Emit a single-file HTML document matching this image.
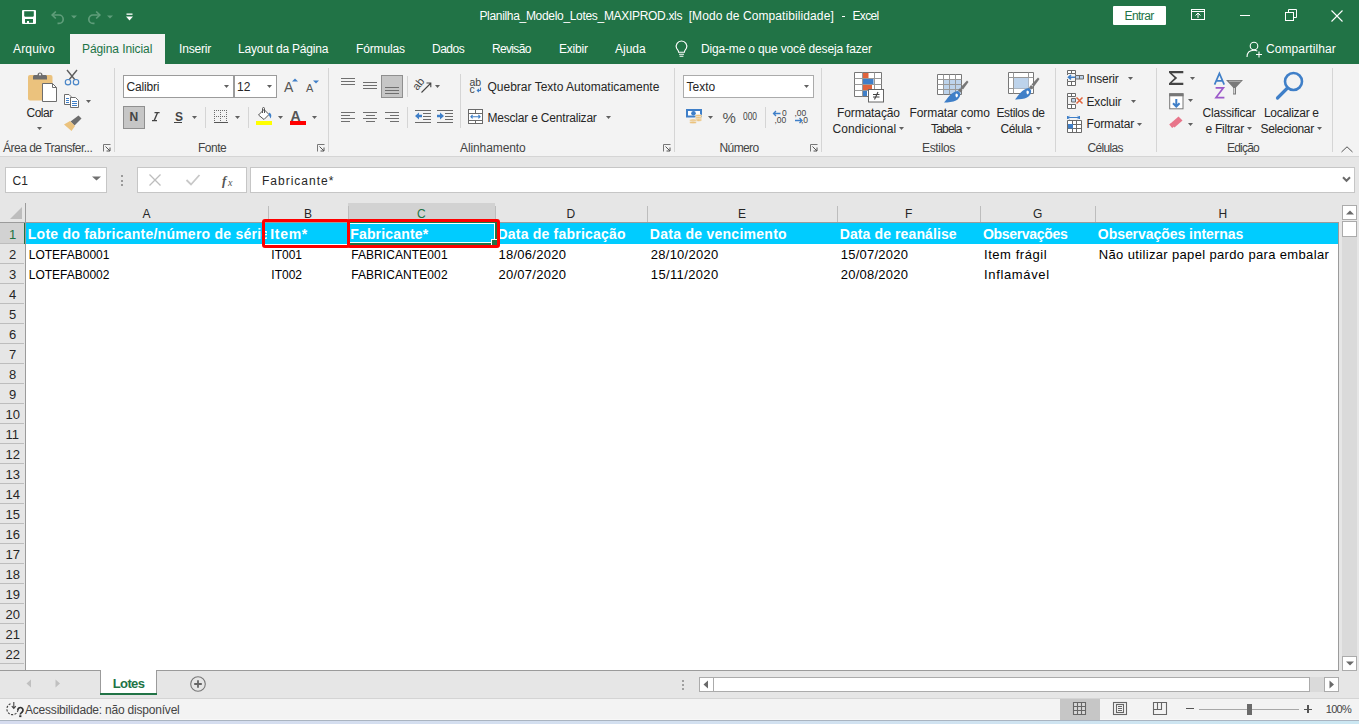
<!DOCTYPE html>
<html><head><meta charset="utf-8">
<style>
*{margin:0;padding:0;box-sizing:border-box}
html,body{width:1359px;height:724px;overflow:hidden;background:#e6e6e6;font-family:"Liberation Sans",sans-serif;position:relative}
.a{position:absolute;white-space:nowrap}
svg.a{overflow:visible}
</style></head><body>
<div class="a" style="left:0px;top:0px;width:1359px;height:64px;background:#217346;"></div>
<svg class="a" style="left:18px;top:6px;" width="24" height="22" viewBox="0 0 24 22"><rect x="4" y="4" width="14" height="14" rx="1" fill="#fff"/><path d="M6.2 5.3H15.8V10L15 10.8H7L6.2 10Z" fill="#217346"/><rect x="7" y="13" width="8" height="3.8" fill="#217346"/><rect x="9" y="15" width="2" height="2" fill="#fff"/></svg>
<svg class="a" style="left:50px;top:9px;" width="16" height="15" viewBox="0 0 16 15"><path d="M2.5 6H9A4.2 4.2 0 0 1 9 14.4H7.5" fill="none" stroke="#5f9d7a" stroke-width="1.7"/><path d="M5.8 2.5L2.2 6L5.8 9.5" fill="none" stroke="#5f9d7a" stroke-width="1.7"/></svg>
<svg class="a" style="left:71px;top:15px;" width="6" height="4" viewBox="0 0 6 4"><path d="M0 0.5H6L3 3.5Z" fill="#5f9d7a"/></svg>
<svg class="a" style="left:86px;top:9px;" width="16" height="15" viewBox="0 0 16 15"><path d="M13.5 6H7A4.2 4.2 0 0 0 7 14.4H8.5" fill="none" stroke="#5f9d7a" stroke-width="1.7"/><path d="M10.2 2.5L13.8 6L10.2 9.5" fill="none" stroke="#5f9d7a" stroke-width="1.7"/></svg>
<svg class="a" style="left:107px;top:15px;" width="6" height="4" viewBox="0 0 6 4"><path d="M0 0.5H6L3 3.5Z" fill="#5f9d7a"/></svg>
<svg class="a" style="left:126px;top:13px;" width="7" height="8" viewBox="0 0 7 8"><rect x="0.5" y="0.5" width="6" height="1.3" fill="#fff"/><path d="M0 3.5H7L3.5 7.5Z" fill="#fff"/></svg>
<div class="a" style="left:479.40px;top:9.00px;font-size:12px;line-height:15px;color:#fff;letter-spacing:-0.315px;">Planilha_Modelo_Lotes_MAXIPROD.xls</div>
<div class="a" style="left:688.70px;top:9.00px;font-size:12px;line-height:15px;color:#fff;letter-spacing:0.096px;">[Modo de Compatibilidade]</div>
<div class="a" style="left:842px;top:16px;width:3px;height:1px;background:#fff;"></div>
<div class="a" style="left:852.50px;top:9.00px;font-size:12px;line-height:15px;color:#fff;letter-spacing:-0.675px;">Excel</div>
<div class="a" style="left:1113px;top:6px;width:53px;height:19px;background:#fff;border-radius:1px"></div>
<div class="a" style="left:1124.60px;top:9.00px;font-size:12px;line-height:15px;color:#217346;letter-spacing:-0.600px;">Entrar</div>
<svg class="a" style="left:1191px;top:9px;" width="15" height="12" viewBox="0 0 15 12"><rect x="0.5" y="0.5" width="13" height="10" fill="none" stroke="#fff" stroke-width="1"/><path d="M0.5 2.5H13.5" stroke="#fff"/><path d="M7 9V4.5M4.5 6.5L7 4L9.5 6.5" fill="none" stroke="#fff"/></svg>
<div class="a" style="left:1240px;top:15px;width:10px;height:1px;background:#fff;"></div>
<svg class="a" style="left:1285px;top:9px;" width="12" height="12" viewBox="0 0 12 12"><rect x="0.5" y="3.5" width="8" height="8" fill="none" stroke="#fff"/><path d="M3.5 3.5V0.5H11.5V8.5H8.5" fill="none" stroke="#fff"/></svg>
<svg class="a" style="left:1331px;top:10px;" width="12" height="12" viewBox="0 0 12 12"><path d="M0.5 0.5L11.5 11.5M11.5 0.5L0.5 11.5" stroke="#fff" stroke-width="1.1"/></svg>
<div class="a" style="left:70px;top:34px;width:95px;height:30px;background:#f3f3f3;"></div>
<div class="a" style="left:13.00px;top:42.00px;font-size:12px;line-height:15px;color:#fff;letter-spacing:0.167px;">Arquivo</div>
<div class="a" style="left:82.00px;top:42.00px;font-size:12px;line-height:15px;color:#217346;letter-spacing:-0.077px;">Página Inicial</div>
<div class="a" style="left:179.00px;top:42.00px;font-size:12px;line-height:15px;color:#fff;letter-spacing:-0.167px;">Inserir</div>
<div class="a" style="left:238.00px;top:42.00px;font-size:12px;line-height:15px;color:#fff;letter-spacing:-0.200px;">Layout da Página</div>
<div class="a" style="left:356.00px;top:42.00px;font-size:12px;line-height:15px;color:#fff;letter-spacing:-0.143px;">Fórmulas</div>
<div class="a" style="left:432.00px;top:42.00px;font-size:12px;line-height:15px;color:#fff;letter-spacing:-0.500px;">Dados</div>
<div class="a" style="left:492.00px;top:42.00px;font-size:12px;line-height:15px;color:#fff;letter-spacing:-0.667px;">Revisão</div>
<div class="a" style="left:559.00px;top:42.00px;font-size:12px;line-height:15px;color:#fff;letter-spacing:-0.200px;">Exibir</div>
<div class="a" style="left:615.00px;top:42.00px;font-size:12px;line-height:15px;color:#fff;">Ajuda</div>
<svg class="a" style="left:674px;top:40px;" width="16" height="18" viewBox="0 0 16 18"><path d="M4.6 12.2C4.6 10.5 3.2 9.5 2.6 8.3A5.3 5.3 0 1 1 12.4 8.3C11.8 9.5 10.4 10.5 10.4 12.2Z" fill="none" stroke="#fff" stroke-width="1.1"/><path d="M5 14.3H10M5.6 16.3H9.4" stroke="#fff" stroke-width="1.1"/></svg>
<div class="a" style="left:701.00px;top:42.00px;font-size:12px;line-height:15px;color:#fff;letter-spacing:-0.167px;">Diga-me o que você deseja fazer</div>
<svg class="a" style="left:1246px;top:41px;" width="17" height="17" viewBox="0 0 17 17"><circle cx="8" cy="5" r="3.8" fill="none" stroke="#fff" stroke-width="1.1"/><path d="M1 16C1 11.5 4 9.3 8 9.3C9.5 9.3 10.5 9.6 11.3 10" fill="none" stroke="#fff" stroke-width="1.1"/><path d="M13 10.5V16.5M10 13.5H16" stroke="#fff" stroke-width="1.1"/></svg>
<div class="a" style="left:1266.00px;top:42.00px;font-size:12px;line-height:15px;color:#fff;letter-spacing:0.091px;">Compartilhar</div>
<div class="a" style="left:0px;top:64px;width:1359px;height:92px;background:#f3f3f3;"></div>
<div class="a" style="left:0px;top:156px;width:1359px;height:1px;background:#d5d5d5;"></div>
<div class="a" style="left:114px;top:68px;width:1px;height:84px;background:#d5d5d5;"></div>
<div class="a" style="left:328px;top:68px;width:1px;height:84px;background:#d5d5d5;"></div>
<div class="a" style="left:674px;top:68px;width:1px;height:84px;background:#d5d5d5;"></div>
<div class="a" style="left:821px;top:68px;width:1px;height:84px;background:#d5d5d5;"></div>
<div class="a" style="left:1055px;top:68px;width:1px;height:84px;background:#d5d5d5;"></div>
<div class="a" style="left:1156px;top:68px;width:1px;height:84px;background:#d5d5d5;"></div>
<div class="a" style="left:1332px;top:68px;width:1px;height:84px;background:#d5d5d5;"></div>
<div class="a" style="left:3.00px;top:141.00px;font-size:12px;line-height:15px;color:#444444;letter-spacing:-0.500px;">Área de Transfer...</div>
<div class="a" style="left:198.00px;top:141.00px;font-size:12px;line-height:15px;color:#444444;letter-spacing:-0.500px;">Fonte</div>
<div class="a" style="left:460.00px;top:141.00px;font-size:12px;line-height:15px;color:#444444;letter-spacing:-0.100px;">Alinhamento</div>
<div class="a" style="left:719.50px;top:141.00px;font-size:12px;line-height:15px;color:#444444;letter-spacing:-0.600px;">Número</div>
<div class="a" style="left:922.00px;top:141.00px;font-size:12px;line-height:15px;color:#444444;letter-spacing:-0.333px;">Estilos</div>
<div class="a" style="left:1087.50px;top:141.00px;font-size:12px;line-height:15px;color:#444444;letter-spacing:-0.667px;">Células</div>
<div class="a" style="left:1227.00px;top:141.00px;font-size:12px;line-height:15px;color:#444444;letter-spacing:-0.800px;">Edição</div>
<svg class="a" style="left:103px;top:144px;" width="8" height="8" viewBox="0 0 8 8"><path d="M0.5 7.5V0.5H7.5" fill="none" stroke="#777" stroke-width="1"/><path d="M2.5 2.5L7 7M7 3.5V7H3.5" fill="none" stroke="#555" stroke-width="1"/></svg>
<svg class="a" style="left:317px;top:144px;" width="8" height="8" viewBox="0 0 8 8"><path d="M0.5 7.5V0.5H7.5" fill="none" stroke="#777" stroke-width="1"/><path d="M2.5 2.5L7 7M7 3.5V7H3.5" fill="none" stroke="#555" stroke-width="1"/></svg>
<svg class="a" style="left:663px;top:144px;" width="8" height="8" viewBox="0 0 8 8"><path d="M0.5 7.5V0.5H7.5" fill="none" stroke="#777" stroke-width="1"/><path d="M2.5 2.5L7 7M7 3.5V7H3.5" fill="none" stroke="#555" stroke-width="1"/></svg>
<svg class="a" style="left:810px;top:144px;" width="8" height="8" viewBox="0 0 8 8"><path d="M0.5 7.5V0.5H7.5" fill="none" stroke="#777" stroke-width="1"/><path d="M2.5 2.5L7 7M7 3.5V7H3.5" fill="none" stroke="#555" stroke-width="1"/></svg>
<svg class="a" style="left:1341px;top:146px;" width="12" height="7" viewBox="0 0 12 7"><path d="M0.5 6L6 0.8L11.5 6" fill="none" stroke="#555" stroke-width="1"/></svg>
<svg class="a" style="left:20px;top:66px;" width="80" height="70" viewBox="0 0 80 70"><rect x="8" y="9" width="24.5" height="25.5" rx="2" fill="#ebc27d"/><path d="M13 13.5V10.5A1.5 1.5 0 0 1 14.5 9H17.5A2.5 2.5 0 0 1 22.5 9H25.5A1.5 1.5 0 0 1 27 10.5V13.5Z" fill="#6d6d6d"/><circle cx="20" cy="8.5" r="1" fill="#fff"/><path d="M22.5 17.5H32.5L36.5 21.5V35.5H22.5Z" fill="#fff" stroke="#6d6d6d" stroke-width="1"/><path d="M32.5 17.5V21.5H36.5" fill="none" stroke="#6d6d6d" stroke-width="1"/><path d="M47 4L55.5 14.5M57 4L48.5 14.5" stroke="#5f5f5f" stroke-width="1.4"/><circle cx="48" cy="16.2" r="2.7" fill="#f3f3f3" stroke="#4a86c8" stroke-width="1.2"/><circle cx="56" cy="16.2" r="2.7" fill="#f3f3f3" stroke="#4a86c8" stroke-width="1.2"/><path d="M44.5 28.5H49L51 30.5V38.5H44.5Z" fill="#fff" stroke="#6d6d6d"/><path d="M46 32.5H49M46 34.5H49M46 36.5H49" stroke="#3f7fc8"/><path d="M50.5 31.5H55.5L58.5 34.5V41.5H50.5Z" fill="#fff" stroke="#6d6d6d"/><path d="M52 35.5H57M52 37.5H57M52 39.5H57" stroke="#3f7fc8"/><path d="M50.5 55.5L58.5 49.5L61.5 52.5L54.5 59.5Z" fill="#6d6d6d"/><path d="M44 58.5L50 55L55 60L51.5 65Z" fill="#ebc27d"/></svg>
<div class="a" style="left:26.50px;top:106.00px;font-size:12px;line-height:15px;color:#262626;letter-spacing:-0.500px;">Colar</div>
<svg class="a" style="left:37.0px;top:127.0px;" width="5.0" height="3" viewBox="0 0 5.0 3"><path d="M0 0H5.0L2.5 3Z" fill="#606060"/></svg>
<svg class="a" style="left:86.0px;top:100.0px;" width="5.0" height="3" viewBox="0 0 5.0 3"><path d="M0 0H5.0L2.5 3Z" fill="#606060"/></svg>
<div class="a" style="left:123px;top:75px;width:111px;height:23px;background:#fff;border:1px solid #9b9b9b"></div>
<div class="a" style="left:234px;top:75px;width:43px;height:23px;background:#fff;border:1px solid #9b9b9b"></div>
<div class="a" style="left:126.50px;top:80.00px;font-size:12px;line-height:15px;color:#262626;letter-spacing:-0.167px;">Calibri</div>
<div class="a" style="left:237.00px;top:80.00px;font-size:12px;line-height:15px;color:#262626;">12</div>
<svg class="a" style="left:224.0px;top:85.0px;" width="5.0" height="3" viewBox="0 0 5.0 3"><path d="M0 0H5.0L2.5 3Z" fill="#606060"/></svg>
<svg class="a" style="left:267.0px;top:85.0px;" width="5.0" height="3" viewBox="0 0 5.0 3"><path d="M0 0H5.0L2.5 3Z" fill="#606060"/></svg>
<div class="a" style="left:284.00px;top:78.00px;font-size:14px;line-height:18px;color:#555;">A</div>
<svg class="a" style="left:292px;top:78px;" width="6" height="4" viewBox="0 0 6 4"><path d="M0 3.5H6L3 0.5Z" fill="#3f7fc8"/></svg>
<div class="a" style="left:306.00px;top:81.00px;font-size:11px;line-height:14px;color:#555;">A</div>
<svg class="a" style="left:313px;top:80px;" width="6" height="4" viewBox="0 0 6 4"><path d="M0 0.5H6L3 3.5Z" fill="#3f7fc8"/></svg>
<div class="a" style="left:123px;top:106px;width:22px;height:23px;background:#c6c6c6;border:1px solid #8f8f8f"></div>
<div class="a" style="left:129.50px;top:110.00px;font-size:12px;line-height:15px;color:#444;font-weight:bold;">N</div>
<svg class="a" style="left:150px;top:110px;" width="12" height="13" viewBox="0 0 12 13"><path d="M4.5 2.6H9.6M2 10.6H7M7.6 2.6L4.2 10.6" fill="none" stroke="#444" stroke-width="1.4"/></svg>
<div class="a" style="left:175.00px;top:110.00px;font-size:12px;line-height:15px;color:#444;font-weight:bold;">S</div>
<div class="a" style="left:174px;top:122px;width:8px;height:1.3px;background:#444;"></div>
<svg class="a" style="left:192.0px;top:116.0px;" width="5.0" height="3" viewBox="0 0 5.0 3"><path d="M0 0H5.0L2.5 3Z" fill="#606060"/></svg>
<div class="a" style="left:205px;top:107px;width:1px;height:21px;background:#d5d5d5;"></div>
<svg class="a" style="left:213px;top:109px;" width="16" height="15" viewBox="0 0 16 15"><path d="M11 7h1v1h-1zM13 1h1v1h-1zM13 7h1v1h-1zM1 5h1v1h-1zM7 3h1v1h-1zM1 11h1v1h-1zM7 9h1v1h-1zM1 1h1v1h-1zM1 7h1v1h-1zM13 3h1v1h-1zM13 9h1v1h-1zM7 5h1v1h-1zM7 11h1v1h-1zM3 1h1v1h-1zM3 7h1v1h-1zM5 1h1v1h-1zM5 7h1v1h-1zM1 3h1v1h-1zM13 5h1v1h-1zM1 9h1v1h-1zM7 1h1v1h-1zM7 7h1v1h-1zM13 11h1v1h-1zM9 1h1v1h-1zM9 7h1v1h-1zM11 1h1v1h-1z" fill="#6d6d6d"/><path d="M1 13.5H15" stroke="#555" stroke-width="1"/></svg>
<svg class="a" style="left:235.0px;top:116.0px;" width="5.0" height="3" viewBox="0 0 5.0 3"><path d="M0 0H5.0L2.5 3Z" fill="#606060"/></svg>
<div class="a" style="left:248px;top:107px;width:1px;height:21px;background:#d5d5d5;"></div>
<svg class="a" style="left:256px;top:107px;" width="17" height="14" viewBox="0 0 17 14"><path d="M2.5 8L8 2.5L13 7.5L8 12.5Z" fill="#fff" stroke="#555" stroke-width="1"/><path d="M6.5 6V1.5A1 1 0 0 1 8.5 1.5V6" fill="none" stroke="#555" stroke-width="1"/><path d="M13.5 5.5Q16.5 7.5 14.5 11.5Q13.5 9 12.5 7.5Z" fill="#3f7fc8"/></svg>
<div class="a" style="left:256px;top:121px;width:16px;height:4px;background:#ffff00;"></div>
<svg class="a" style="left:278.0px;top:116.0px;" width="5.0" height="3" viewBox="0 0 5.0 3"><path d="M0 0H5.0L2.5 3Z" fill="#606060"/></svg>
<div class="a" style="left:290.50px;top:107.00px;font-size:14px;line-height:18px;color:#555;font-weight:bold;">A</div>
<div class="a" style="left:290px;top:121px;width:16px;height:4px;background:#ff0000;"></div>
<svg class="a" style="left:312.0px;top:116.0px;" width="5.0" height="3" viewBox="0 0 5.0 3"><path d="M0 0H5.0L2.5 3Z" fill="#606060"/></svg>
<div class="a" style="left:341px;top:78px;width:14px;height:1px;background:#6f6f6f;"></div>
<div class="a" style="left:341px;top:81px;width:14px;height:1px;background:#6f6f6f;"></div>
<div class="a" style="left:341px;top:84px;width:14px;height:1px;background:#6f6f6f;"></div>
<div class="a" style="left:363px;top:82px;width:14px;height:1px;background:#6f6f6f;"></div>
<div class="a" style="left:363px;top:85px;width:14px;height:1px;background:#6f6f6f;"></div>
<div class="a" style="left:363px;top:88px;width:14px;height:1px;background:#6f6f6f;"></div>
<div class="a" style="left:381px;top:75px;width:22px;height:23px;background:#c6c6c6;border:1px solid #8f8f8f"></div>
<div class="a" style="left:385px;top:87px;width:14px;height:1px;background:#6f6f6f;"></div>
<div class="a" style="left:385px;top:90px;width:14px;height:1px;background:#6f6f6f;"></div>
<div class="a" style="left:385px;top:93px;width:14px;height:1px;background:#6f6f6f;"></div>
<div class="a" style="left:407px;top:76px;width:1px;height:21px;background:#d5d5d5;"></div>
<svg class="a" style="left:405px;top:70px;" width="90" height="60" viewBox="0 0 90 60"><text x="0" y="0" font-size="11" fill="#444" font-family="Liberation Sans" transform="translate(12.5 21) rotate(-52)">ab</text><path d="M16.5 22.5L25.5 13.5M21.5 13H25.8V17.3" fill="none" stroke="#444" stroke-width="1.1"/><text x="64.5" y="16" font-size="10.5" fill="#444" font-family="Liberation Sans">ab</text><text x="64.5" y="22.5" font-size="10.5" fill="#444" font-family="Liberation Sans">c</text><path d="M75.5 17.5V20.5H72.5M74 19L72.3 20.5L74 22" fill="none" stroke="#3f7fc8" stroke-width="1.1"/><path d="M10 40.5H26M18 43.5H26M18 46.5H26M18 49.5H26M10 52.5H26" stroke="#6a6a6a" stroke-width="1"/><path d="M10 46L14 42.5V44.8H17V47.2H14V49.5Z" fill="#3f7fc8"/><path d="M32 40.5H48M40 43.5H48M40 46.5H48M40 49.5H48M32 52.5H48" stroke="#6a6a6a" stroke-width="1"/><path d="M39 46L35 42.5V44.8H32V47.2H35V49.5Z" fill="#3f7fc8"/><rect x="63.5" y="39.5" width="14" height="14" fill="#fff" stroke="#6a6a6a"/><path d="M63.5 43.5H77.5M63.5 50.5H77.5M70.5 39.5V43.5M70.5 50.5V53.5" stroke="#6a6a6a"/><path d="M66 46.7H75M67.6 45L65.9 46.7L67.6 48.4M73.4 45L75.1 46.7L73.4 48.4" fill="none" stroke="#3f7fc8" stroke-width="1.1"/></svg>
<svg class="a" style="left:435.0px;top:85.0px;" width="5.0" height="3" viewBox="0 0 5.0 3"><path d="M0 0H5.0L2.5 3Z" fill="#606060"/></svg>
<div class="a" style="left:460px;top:74px;width:1px;height:54px;background:#d5d5d5;"></div>
<div class="a" style="left:487.50px;top:80.00px;font-size:12px;line-height:15px;color:#262626;">Quebrar Texto Automaticamente</div>
<div class="a" style="left:341px;top:112px;width:14px;height:1px;background:#6f6f6f;"></div>
<div class="a" style="left:341px;top:115px;width:9px;height:1px;background:#6f6f6f;"></div>
<div class="a" style="left:341px;top:118px;width:14px;height:1px;background:#6f6f6f;"></div>
<div class="a" style="left:341px;top:121px;width:9px;height:1px;background:#6f6f6f;"></div>
<div class="a" style="left:363px;top:112px;width:14px;height:1px;background:#6f6f6f;"></div>
<div class="a" style="left:365.5px;top:115px;width:9px;height:1px;background:#6f6f6f;"></div>
<div class="a" style="left:363px;top:118px;width:14px;height:1px;background:#6f6f6f;"></div>
<div class="a" style="left:365.5px;top:121px;width:9px;height:1px;background:#6f6f6f;"></div>
<div class="a" style="left:385px;top:112px;width:14px;height:1px;background:#6f6f6f;"></div>
<div class="a" style="left:390px;top:115px;width:9px;height:1px;background:#6f6f6f;"></div>
<div class="a" style="left:385px;top:118px;width:14px;height:1px;background:#6f6f6f;"></div>
<div class="a" style="left:390px;top:121px;width:9px;height:1px;background:#6f6f6f;"></div>
<div class="a" style="left:407px;top:107px;width:1px;height:21px;background:#d5d5d5;"></div>
<div class="a" style="left:487.50px;top:111.00px;font-size:12px;line-height:15px;color:#262626;letter-spacing:-0.200px;">Mesclar e Centralizar</div>
<svg class="a" style="left:606.0px;top:116.0px;" width="5.0" height="3" viewBox="0 0 5.0 3"><path d="M0 0H5.0L2.5 3Z" fill="#606060"/></svg>
<div class="a" style="left:683px;top:75px;width:131px;height:23px;background:#fff;border:1px solid #ababab"></div>
<div class="a" style="left:686.50px;top:80.00px;font-size:12px;line-height:15px;color:#262626;">Texto</div>
<svg class="a" style="left:804.0px;top:85.0px;" width="5.0" height="3" viewBox="0 0 5.0 3"><path d="M0 0H5.0L2.5 3Z" fill="#606060"/></svg>
<svg class="a" style="left:680px;top:100px;" width="140" height="30" viewBox="0 0 140 30"><rect x="6" y="9" width="16" height="8.5" fill="#3f7fc8"/><rect x="8" y="11" width="12" height="4.5" fill="#fff"/><circle cx="13.5" cy="13.2" r="2.3" fill="#3f7fc8"/><path d="M17 13.5H21.5" stroke="#fff" stroke-width="0"/><ellipse cx="18.5" cy="15.7" rx="3.5" ry="1.3" fill="#ebc27d" stroke="#f3f3f3" stroke-width="0.6"/><ellipse cx="18.5" cy="17.9" rx="3.5" ry="1.3" fill="#ebc27d" stroke="#f3f3f3" stroke-width="0.6"/><ellipse cx="18.5" cy="20.1" rx="3.5" ry="1.3" fill="#ebc27d" stroke="#f3f3f3" stroke-width="0.6"/><ellipse cx="13" cy="20.2" rx="3.5" ry="1.3" fill="#ebc27d" stroke="#f3f3f3" stroke-width="0.6"/><ellipse cx="13" cy="22.4" rx="3.5" ry="1.3" fill="#ebc27d" stroke="#f3f3f3" stroke-width="0.6"/><text x="102" y="16.3" font-size="8.5" fill="#444" font-family="Liberation Sans">0</text><text x="94.5" y="23" font-size="8.5" fill="#444" font-family="Liberation Sans">,00</text><path d="M100.5 13.5H93.5M96 11L93.5 13.5L96 16" fill="none" stroke="#3f7fc8" stroke-width="1.3"/><text x="114.5" y="16.3" font-size="8.5" fill="#444" font-family="Liberation Sans">,00</text><text x="121" y="23" font-size="8.5" fill="#444" font-family="Liberation Sans">,0</text><path d="M115 20.5H122M119.5 18L122 20.5L119.5 23" fill="none" stroke="#3f7fc8" stroke-width="1.3"/></svg>
<svg class="a" style="left:708.0px;top:116.0px;" width="5.0" height="3" viewBox="0 0 5.0 3"><path d="M0 0H5.0L2.5 3Z" fill="#606060"/></svg>
<div class="a" style="left:722.50px;top:108.00px;font-size:15px;line-height:19px;color:#555;">%</div>
<div class="a" style="left:743.00px;top:111.00px;font-size:10px;line-height:12px;color:#444;transform:scaleX(0.84);transform-origin:0 0;">000</div>
<div class="a" style="left:765px;top:107px;width:1px;height:21px;background:#d5d5d5;"></div>
<svg class="a" style="left:854px;top:72px;" width="32" height="32" viewBox="0 0 32 32"><path d="M0.5 0.5H27.5V24.5H0.5Z" fill="#fff" stroke="#777"/><path d="M0.5 6.5H27.5M0.5 12.5H27.5M0.5 18.5H27.5M8.5 0.5V24.5M20.5 0.5V24.5" stroke="#999"/><rect x="9" y="1" width="5.5" height="5" fill="#e0643d"/><rect x="9" y="7" width="10.5" height="5" fill="#3f7fc8"/><rect x="9" y="13" width="9" height="5" fill="#e0643d"/><rect x="9" y="19" width="4" height="5" fill="#3f7fc8"/><rect x="14.5" y="17.5" width="15" height="12.5" fill="#fff" stroke="#666"/><path d="M19 22.5H25.5M19 25H25.5M24 20L20.5 27.5" stroke="#444" stroke-width="1.1"/></svg>
<div class="a" style="left:837.00px;top:106.00px;font-size:12px;line-height:15px;color:#262626;letter-spacing:-0.111px;">Formatação</div>
<div class="a" style="left:832.50px;top:122.00px;font-size:12px;line-height:15px;color:#262626;letter-spacing:0.100px;">Condicional</div>
<svg class="a" style="left:899.0px;top:127.0px;" width="5.0" height="3" viewBox="0 0 5.0 3"><path d="M0 0H5.0L2.5 3Z" fill="#606060"/></svg>
<svg class="a" style="left:937px;top:74px;" width="34" height="32" viewBox="0 0 34 32"><path d="M0.5 0.5H24.5V20.5H0.5Z" fill="#fff" stroke="#777"/><rect x="7" y="6" width="17" height="14" fill="#bdd3eb"/><path d="M0.5 5.5H24.5M0.5 10.5H24.5M0.5 15.5H24.5M6.5 0.5V20.5M12.5 0.5V20.5M18.5 0.5V20.5" stroke="#999"/><g transform="translate(0 0)"><path d="M30 6.5L31.5 8L26 15.5L23.5 13.5Z" fill="#777"/><path d="M23 14L25.5 16L23.5 18.5L21 16.5Z" fill="#777"/><path d="M20.5 17C24.5 18 24 24 19 26.5C16 28 11 28.5 7 28.5C10 25.5 13 18.5 20.5 17Z" fill="#3f7fc8"/><path d="M19 19.5C21.5 19.5 21.5 22.5 19.5 23.5C18.5 22.5 18 21 19 19.5Z" fill="#fff"/></g></svg>
<div class="a" style="left:909.50px;top:106.00px;font-size:12px;line-height:15px;color:#262626;letter-spacing:-0.083px;">Formatar como</div>
<div class="a" style="left:931.00px;top:122.00px;font-size:12px;line-height:15px;color:#262626;letter-spacing:-0.800px;">Tabela</div>
<svg class="a" style="left:966.0px;top:127.0px;" width="5.0" height="3" viewBox="0 0 5.0 3"><path d="M0 0H5.0L2.5 3Z" fill="#606060"/></svg>
<svg class="a" style="left:1008px;top:72px;" width="34" height="32" viewBox="0 0 34 32"><path d="M0.5 0.5H25.5V21.5H0.5Z" fill="#fff" stroke="#777"/><path d="M0.5 5.5H25.5M0.5 16.5H25.5M5.5 0.5V21.5M20.5 0.5V21.5" stroke="#999"/><rect x="6" y="6" width="14.5" height="10.5" fill="#bdd3eb"/><g transform="translate(0 -1)"><path d="M30 6.5L31.5 8L26 15.5L23.5 13.5Z" fill="#777"/><path d="M23 14L25.5 16L23.5 18.5L21 16.5Z" fill="#777"/><path d="M20.5 17C24.5 18 24 24 19 26.5C16 28 11 28.5 7 28.5C10 25.5 13 18.5 20.5 17Z" fill="#3f7fc8"/><path d="M19 19.5C21.5 19.5 21.5 22.5 19.5 23.5C18.5 22.5 18 21 19 19.5Z" fill="#fff"/></g></svg>
<div class="a" style="left:996.50px;top:106.00px;font-size:12px;line-height:15px;color:#262626;letter-spacing:-0.389px;">Estilos de</div>
<div class="a" style="left:1000.50px;top:122.00px;font-size:12px;line-height:15px;color:#262626;letter-spacing:-0.400px;">Célula</div>
<svg class="a" style="left:1036.0px;top:127.0px;" width="5.0" height="3" viewBox="0 0 5.0 3"><path d="M0 0H5.0L2.5 3Z" fill="#606060"/></svg>
<svg class="a" style="left:1060px;top:66px;" width="90" height="70" viewBox="0 0 90 70"><path d="M7.5 4.5H15.5V7.5H7.5ZM11.5 4.5V7.5" fill="#fff" stroke="#6a6a6a"/><path d="M7.5 15.5H15.5V19.5H7.5ZM11.5 15.5V19.5" fill="#fff" stroke="#6a6a6a"/><path d="M7.5 7.5V9M7.5 13V15.5M15.5 7.5V9M15.5 13V15.5" stroke="#6a6a6a"/><path d="M15.5 9.5H23.5V13H15.5ZM19.5 9.5V13" fill="#bdd3eb" stroke="#6a6a6a"/><path d="M15 11.2H9M11 9L8.5 11.2L11 13.4" fill="none" stroke="#3f7fc8" stroke-width="1.6"/><path d="M7.5 27.5H15.5V30.5H7.5ZM11.5 27.5V30.5" fill="#fff" stroke="#6a6a6a"/><path d="M7.5 38.5H15.5V42.5H7.5ZM11.5 38.5V42.5" fill="#fff" stroke="#6a6a6a"/><path d="M7.5 30.5V38.5" stroke="#6a6a6a"/><path d="M11.5 32.5H15.5V36H11.5Z" fill="#bdd3eb" stroke="#6a6a6a"/><path d="M16.5 31.5L22.5 37.5M22.5 31.5L16.5 37.5" stroke="#e0643d" stroke-width="1.5"/><path d="M7.5 51.5H19.5M7.5 50V53M19.5 50V53M9.5 49.8L7.8 51.5L9.5 53.2M17.5 49.8L19.2 51.5L17.5 53.2" fill="none" stroke="#3f7fc8" stroke-width="1"/><path d="M7.5 54.5H21.5V66.5H7.5ZM7.5 58.5H21.5M7.5 62.5H21.5M12.5 54.5V66.5M16.5 54.5V66.5" fill="#fff" stroke="#6a6a6a"/><rect x="8" y="58" width="5" height="4.5" fill="#3f7fc8"/></svg>
<div class="a" style="left:1086.50px;top:72.00px;font-size:12px;line-height:15px;color:#262626;letter-spacing:-0.167px;">Inserir</div>
<svg class="a" style="left:1128.0px;top:77.0px;" width="5.0" height="3" viewBox="0 0 5.0 3"><path d="M0 0H5.0L2.5 3Z" fill="#606060"/></svg>
<div class="a" style="left:1086.50px;top:95.00px;font-size:12px;line-height:15px;color:#262626;letter-spacing:-0.167px;">Excluir</div>
<svg class="a" style="left:1131.0px;top:100.0px;" width="5.0" height="3" viewBox="0 0 5.0 3"><path d="M0 0H5.0L2.5 3Z" fill="#606060"/></svg>
<div class="a" style="left:1086.50px;top:117.00px;font-size:12px;line-height:15px;color:#262626;letter-spacing:-0.143px;">Formatar</div>
<svg class="a" style="left:1137.0px;top:123.0px;" width="5.0" height="3" viewBox="0 0 5.0 3"><path d="M0 0H5.0L2.5 3Z" fill="#606060"/></svg>
<svg class="a" style="left:1160px;top:66px;" width="30" height="70" viewBox="0 0 30 70"><path d="M9 5H23.3V7.2H11.8L17.2 12L11.8 16.8H23.3V19H9V17.2L14.6 12L9 6.8Z" fill="#444"/></svg>
<svg class="a" style="left:1190.0px;top:77.0px;" width="5.0" height="3" viewBox="0 0 5.0 3"><path d="M0 0H5.0L2.5 3Z" fill="#606060"/></svg>
<svg class="a" style="left:1160px;top:66px;" width="30" height="70" viewBox="0 0 30 70"><rect x="9.7" y="27.8" width="13.3" height="15" fill="#fff" stroke="#777" stroke-width="1"/><rect x="9.2" y="27.3" width="14.3" height="3" fill="#777"/><path d="M16.3 33V40.5M13 37.3L16.3 40.5L19.6 37.3" fill="none" stroke="#3f7fc8" stroke-width="2"/></svg>
<svg class="a" style="left:1188.0px;top:99.0px;" width="5.0" height="3" viewBox="0 0 5.0 3"><path d="M0 0H5.0L2.5 3Z" fill="#606060"/></svg>
<svg class="a" style="left:1160px;top:66px;" width="30" height="70" viewBox="0 0 30 70"><path d="M10.5 58.5L18.5 51.5L22.5 55.5L14.5 62.5Z" fill="#e8758a" transform="translate(0 -1)"/><path d="M9.2 59.5L11 58L14 61.5L12.2 63Z" fill="#e8758a" transform="translate(0 -1)"/></svg>
<svg class="a" style="left:1188.0px;top:123.0px;" width="5.0" height="3" viewBox="0 0 5.0 3"><path d="M0 0H5.0L2.5 3Z" fill="#606060"/></svg>
<svg class="a" style="left:1210px;top:70px;" width="36" height="32" viewBox="0 0 36 32"><path d="M4.6 14.6L9.4 3.4L14.2 14.6M6.3 10.8H12.5" fill="none" stroke="#3f7fc8" stroke-width="1.7"/><path d="M5.6 17.8H13.4L6 27.6H14.4" fill="none" stroke="#9b59c9" stroke-width="1.7"/><path d="M16 10H33L26 17.5V24.5H23V17.5Z" fill="#7a7a7a"/><path d="M19 11.3H30.5" stroke="#f3f3f3" stroke-width="0.8" opacity="0.6"/><path d="M24.2 18V23.5" stroke="#fff" stroke-width="1"/></svg>
<div class="a" style="left:1202.50px;top:106.00px;font-size:12px;line-height:15px;color:#262626;letter-spacing:-0.200px;">Classificar</div>
<div class="a" style="left:1205.50px;top:122.00px;font-size:12px;line-height:15px;color:#262626;letter-spacing:-0.250px;">e Filtrar</div>
<svg class="a" style="left:1247.0px;top:127.0px;" width="5.0" height="3" viewBox="0 0 5.0 3"><path d="M0 0H5.0L2.5 3Z" fill="#606060"/></svg>
<svg class="a" style="left:1275px;top:71px;" width="30" height="29" viewBox="0 0 30 29"><circle cx="18.5" cy="10.5" r="8.5" fill="none" stroke="#3f7fc8" stroke-width="2.6"/><path d="M12.5 17L2.5 27" stroke="#3f7fc8" stroke-width="3.2" stroke-linecap="round"/></svg>
<div class="a" style="left:1264.00px;top:106.00px;font-size:12px;line-height:15px;color:#262626;letter-spacing:-0.300px;">Localizar e</div>
<div class="a" style="left:1260.50px;top:122.00px;font-size:12px;line-height:15px;color:#262626;letter-spacing:-0.333px;">Selecionar</div>
<svg class="a" style="left:1317.0px;top:127.0px;" width="5.0" height="3" viewBox="0 0 5.0 3"><path d="M0 0H5.0L2.5 3Z" fill="#606060"/></svg>
<div class="a" style="left:0px;top:157px;width:1359px;height:46px;background:#e6e6e6;"></div>
<div class="a" style="left:5px;top:167px;width:102px;height:26px;background:#fff;border:1px solid #c6c6c6"></div>
<div class="a" style="left:12.50px;top:174.00px;font-size:12px;line-height:15px;color:#262626;">C1</div>
<svg class="a" style="left:92px;top:176px;" width="9" height="5" viewBox="0 0 9 5"><path d="M0 0.5H9L4.5 4.5Z" fill="#707070"/></svg>
<div class="a" style="left:121px;top:175px;width:2px;height:2px;background:#9a9a9a;"></div>
<div class="a" style="left:121px;top:180px;width:2px;height:2px;background:#9a9a9a;"></div>
<div class="a" style="left:121px;top:184px;width:2px;height:2px;background:#9a9a9a;"></div>
<div class="a" style="left:137px;top:167px;width:110px;height:26px;background:#fff;border:1px solid #c6c6c6"></div>
<svg class="a" style="left:148px;top:173px;" width="14" height="14" viewBox="0 0 14 14"><path d="M1.5 1.5L12.5 12.5M12.5 1.5L1.5 12.5" stroke="#bdbdbd" stroke-width="1.3"/></svg>
<svg class="a" style="left:185px;top:173px;" width="16" height="14" viewBox="0 0 16 14"><path d="M1.5 7L6 11.5L14.5 2" fill="none" stroke="#c8c8c8" stroke-width="1.8"/></svg>
<div class="a" style="left:222.00px;top:173.00px;font-size:13px;line-height:16px;color:#555;font-style:italic;font-family:'Liberation Serif',serif;font-weight:bold;">f</div>
<div class="a" style="left:228.00px;top:177.00px;font-size:10px;line-height:12px;color:#555;font-style:italic;font-family:'Liberation Serif',serif;">x</div>
<div class="a" style="left:250px;top:167px;width:105px;height:26px;background:#fff;border:1px solid #c6c6c6"></div>
<div class="a" style="left:250px;top:167px;width:1105px;height:26px;background:#fff;border:1px solid #c6c6c6"></div>
<div class="a" style="left:262.00px;top:174.00px;font-size:12px;line-height:15px;color:#262626;letter-spacing:1.000px;">Fabricante*</div>
<svg class="a" style="left:1342px;top:176px;" width="9" height="7" viewBox="0 0 9 7"><path d="M1 1.2L4.5 4.8L8 1.2" fill="none" stroke="#6a6a6a" stroke-width="2"/></svg>
<div class="a" style="left:0px;top:203px;width:1338px;height:467px;background:#fff;"></div>
<div class="a" style="left:0px;top:203px;width:1338px;height:19px;background:#e6e6e6;"></div>
<div class="a" style="left:348px;top:203px;width:147px;height:19px;background:#d2d2d2;"></div>
<svg class="a" style="left:8px;top:206px;" width="15" height="14" viewBox="0 0 15 14"><path d="M14 1V13H2Z" fill="#bdbdbd"/></svg>
<div class="a" style="left:25px;top:203px;width:1px;height:19px;background:#9b9b9b;"></div>
<div class="a" style="left:268px;top:206px;width:1px;height:16px;background:#bdbdbd;"></div>
<div class="a" style="left:348px;top:206px;width:1px;height:16px;background:#bdbdbd;"></div>
<div class="a" style="left:495px;top:206px;width:1px;height:16px;background:#bdbdbd;"></div>
<div class="a" style="left:647px;top:206px;width:1px;height:16px;background:#bdbdbd;"></div>
<div class="a" style="left:837px;top:206px;width:1px;height:16px;background:#bdbdbd;"></div>
<div class="a" style="left:980px;top:206px;width:1px;height:16px;background:#bdbdbd;"></div>
<div class="a" style="left:1095px;top:206px;width:1px;height:16px;background:#bdbdbd;"></div>
<div class="a" style="left:0px;top:222px;width:1338px;height:1px;background:#9b9b9b;"></div>
<div class="a" style="left:142.50px;top:207.00px;font-size:12px;line-height:15px;color:#262626;">A</div>
<div class="a" style="left:304.00px;top:207.00px;font-size:12px;line-height:15px;color:#262626;">B</div>
<div class="a" style="left:417.00px;top:207.00px;font-size:12px;line-height:15px;color:#217346;">C</div>
<div class="a" style="left:566.50px;top:207.00px;font-size:12px;line-height:15px;color:#262626;">D</div>
<div class="a" style="left:738.00px;top:207.00px;font-size:12px;line-height:15px;color:#262626;">E</div>
<div class="a" style="left:905.00px;top:207.00px;font-size:12px;line-height:15px;color:#262626;">F</div>
<div class="a" style="left:1033.00px;top:207.00px;font-size:12px;line-height:15px;color:#262626;">G</div>
<div class="a" style="left:1218.50px;top:207.00px;font-size:12px;line-height:15px;color:#262626;">H</div>
<div class="a" style="left:0px;top:223px;width:25px;height:447px;background:#e6e6e6;"></div>
<div class="a" style="left:0px;top:223px;width:25px;height:21px;background:#d2d2d2;"></div>
<div class="a" style="left:25px;top:223px;width:1px;height:447px;background:#9b9b9b;"></div>
<div class="a" style="left:24px;top:223px;width:1px;height:21px;background:#217346;"></div>
<div class="a" style="left:0px;top:243px;width:24px;height:1px;background:#bdbdbd;"></div>
<div class="a" style="left:0px;top:263px;width:24px;height:1px;background:#bdbdbd;"></div>
<div class="a" style="left:0px;top:283px;width:24px;height:1px;background:#bdbdbd;"></div>
<div class="a" style="left:0px;top:303px;width:24px;height:1px;background:#bdbdbd;"></div>
<div class="a" style="left:0px;top:323px;width:24px;height:1px;background:#bdbdbd;"></div>
<div class="a" style="left:0px;top:343px;width:24px;height:1px;background:#bdbdbd;"></div>
<div class="a" style="left:0px;top:363px;width:24px;height:1px;background:#bdbdbd;"></div>
<div class="a" style="left:0px;top:383px;width:24px;height:1px;background:#bdbdbd;"></div>
<div class="a" style="left:0px;top:403px;width:24px;height:1px;background:#bdbdbd;"></div>
<div class="a" style="left:0px;top:423px;width:24px;height:1px;background:#bdbdbd;"></div>
<div class="a" style="left:0px;top:443px;width:24px;height:1px;background:#bdbdbd;"></div>
<div class="a" style="left:0px;top:463px;width:24px;height:1px;background:#bdbdbd;"></div>
<div class="a" style="left:0px;top:483px;width:24px;height:1px;background:#bdbdbd;"></div>
<div class="a" style="left:0px;top:503px;width:24px;height:1px;background:#bdbdbd;"></div>
<div class="a" style="left:0px;top:523px;width:24px;height:1px;background:#bdbdbd;"></div>
<div class="a" style="left:0px;top:543px;width:24px;height:1px;background:#bdbdbd;"></div>
<div class="a" style="left:0px;top:563px;width:24px;height:1px;background:#bdbdbd;"></div>
<div class="a" style="left:0px;top:583px;width:24px;height:1px;background:#bdbdbd;"></div>
<div class="a" style="left:0px;top:603px;width:24px;height:1px;background:#bdbdbd;"></div>
<div class="a" style="left:0px;top:623px;width:24px;height:1px;background:#bdbdbd;"></div>
<div class="a" style="left:0px;top:643px;width:24px;height:1px;background:#bdbdbd;"></div>
<div class="a" style="left:0px;top:663px;width:24px;height:1px;background:#bdbdbd;"></div>
<div class="a" style="left:9.00px;top:227.00px;font-size:13px;line-height:16px;color:#217346;">1</div>
<div class="a" style="left:9.00px;top:247.00px;font-size:13px;line-height:16px;color:#262626;">2</div>
<div class="a" style="left:9.00px;top:267.00px;font-size:13px;line-height:16px;color:#262626;">3</div>
<div class="a" style="left:9.00px;top:287.00px;font-size:13px;line-height:16px;color:#262626;">4</div>
<div class="a" style="left:9.00px;top:307.00px;font-size:13px;line-height:16px;color:#262626;">5</div>
<div class="a" style="left:9.00px;top:327.00px;font-size:13px;line-height:16px;color:#262626;">6</div>
<div class="a" style="left:9.00px;top:347.00px;font-size:13px;line-height:16px;color:#262626;">7</div>
<div class="a" style="left:9.00px;top:367.00px;font-size:13px;line-height:16px;color:#262626;">8</div>
<div class="a" style="left:9.00px;top:387.00px;font-size:13px;line-height:16px;color:#262626;">9</div>
<div class="a" style="left:5.50px;top:407.00px;font-size:13px;line-height:16px;color:#262626;">10</div>
<div class="a" style="left:5.50px;top:427.00px;font-size:13px;line-height:16px;color:#262626;">11</div>
<div class="a" style="left:5.50px;top:447.00px;font-size:13px;line-height:16px;color:#262626;">12</div>
<div class="a" style="left:5.50px;top:467.00px;font-size:13px;line-height:16px;color:#262626;">13</div>
<div class="a" style="left:5.50px;top:487.00px;font-size:13px;line-height:16px;color:#262626;">14</div>
<div class="a" style="left:5.50px;top:507.00px;font-size:13px;line-height:16px;color:#262626;">15</div>
<div class="a" style="left:5.50px;top:527.00px;font-size:13px;line-height:16px;color:#262626;">16</div>
<div class="a" style="left:5.50px;top:547.00px;font-size:13px;line-height:16px;color:#262626;">17</div>
<div class="a" style="left:5.50px;top:567.00px;font-size:13px;line-height:16px;color:#262626;">18</div>
<div class="a" style="left:5.50px;top:587.00px;font-size:13px;line-height:16px;color:#262626;">19</div>
<div class="a" style="left:5.50px;top:607.00px;font-size:13px;line-height:16px;color:#262626;">20</div>
<div class="a" style="left:5.50px;top:627.00px;font-size:13px;line-height:16px;color:#262626;">21</div>
<div class="a" style="left:5.50px;top:647.00px;font-size:13px;line-height:16px;color:#262626;">22</div>
<div class="a" style="left:26px;top:223px;width:1312px;height:21px;background:#00ccff;"></div>
<div class="a" style="left:27.80px;top:225.00px;font-size:14px;line-height:18px;color:#fff;font-weight:bold;width:239.2px;overflow:hidden;letter-spacing:0.24px;">Lote do fabricante/número de série</div>
<div class="a" style="left:270.30px;top:225.00px;font-size:14px;line-height:18px;color:#fff;letter-spacing:0.675px;font-weight:bold;">Item*</div>
<div class="a" style="left:350.20px;top:225.00px;font-size:14px;line-height:18px;color:#fff;letter-spacing:0.180px;font-weight:bold;">Fabricante*</div>
<div class="a" style="left:497.50px;top:225.00px;font-size:14px;line-height:18px;color:#fff;letter-spacing:0.206px;font-weight:bold;">Data de fabricação</div>
<div class="a" style="left:649.80px;top:225.00px;font-size:14px;line-height:18px;color:#fff;letter-spacing:0.271px;font-weight:bold;">Data de vencimento</div>
<div class="a" style="left:839.70px;top:225.00px;font-size:14px;line-height:18px;color:#fff;letter-spacing:0.112px;font-weight:bold;">Data de reanálise</div>
<div class="a" style="left:983.00px;top:225.00px;font-size:14px;line-height:18px;color:#fff;letter-spacing:-0.320px;font-weight:bold;">Observações</div>
<div class="a" style="left:1097.80px;top:225.00px;font-size:14px;line-height:18px;color:#fff;letter-spacing:-0.047px;font-weight:bold;">Observações internas</div>
<div class="a" style="left:28.80px;top:248.00px;font-size:12px;line-height:15px;color:#000;letter-spacing:-0.010px;">LOTEFAB0001</div>
<div class="a" style="left:28.80px;top:268.00px;font-size:12px;line-height:15px;color:#000;letter-spacing:-0.010px;">LOTEFAB0002</div>
<div class="a" style="left:271.30px;top:248.00px;font-size:12px;line-height:15px;color:#000;">IT001</div>
<div class="a" style="left:271.30px;top:268.00px;font-size:12px;line-height:15px;color:#000;">IT002</div>
<div class="a" style="left:351.20px;top:248.00px;font-size:12px;line-height:15px;color:#000;letter-spacing:0.083px;">FABRICANTE001</div>
<div class="a" style="left:351.20px;top:268.00px;font-size:12px;line-height:15px;color:#000;letter-spacing:0.083px;">FABRICANTE002</div>
<div class="a" style="left:498.50px;top:247.00px;font-size:13px;line-height:16px;color:#000;letter-spacing:0.256px;">18/06/2020</div>
<div class="a" style="left:498.50px;top:267.00px;font-size:13px;line-height:16px;color:#000;letter-spacing:0.256px;">20/07/2020</div>
<div class="a" style="left:650.80px;top:247.00px;font-size:13px;line-height:16px;color:#000;letter-spacing:0.256px;">28/10/2020</div>
<div class="a" style="left:650.80px;top:267.00px;font-size:13px;line-height:16px;color:#000;letter-spacing:0.367px;">15/11/2020</div>
<div class="a" style="left:840.70px;top:247.00px;font-size:13px;line-height:16px;color:#000;letter-spacing:0.256px;">15/07/2020</div>
<div class="a" style="left:840.70px;top:267.00px;font-size:13px;line-height:16px;color:#000;letter-spacing:0.256px;">20/08/2020</div>
<div class="a" style="left:984.00px;top:247.00px;font-size:13px;line-height:16px;color:#000;letter-spacing:0.550px;">Item frágil</div>
<div class="a" style="left:984.00px;top:267.00px;font-size:13px;line-height:16px;color:#000;letter-spacing:0.644px;">Inflamável</div>
<div class="a" style="left:1098.80px;top:247.00px;font-size:13px;line-height:16px;color:#000;letter-spacing:0.347px;">Não utilizar papel pardo para embalar</div>
<div class="a" style="left:348px;top:222px;width:149px;height:23px;background:transparent;border:2px solid #217346;border-top-width:1px"></div>
<div class="a" style="left:349px;top:223px;width:146px;height:20px;background:transparent;border:1px solid #fff"></div>
<div class="a" style="left:492px;top:240px;width:5px;height:5px;background:#217346;outline:1px solid #fff"></div>
<div class="a" style="left:262px;top:219px;width:88px;height:29px;background:transparent;border:3px solid #f00;border-radius:3px"></div>
<div class="a" style="left:347px;top:219px;width:153px;height:29px;background:transparent;border:3px solid #f00;border-radius:3px"></div>
<div class="a" style="left:1338px;top:222px;width:1px;height:449px;background:#9b9b9b;"></div>
<div class="a" style="left:0px;top:670px;width:1339px;height:1px;background:#9b9b9b;"></div>
<div class="a" style="left:1339px;top:203px;width:20px;height:468px;background:#e6e6e6;"></div>
<div class="a" style="left:1342px;top:221px;width:15px;height:435px;background:#dadada;"></div>
<div class="a" style="left:1342px;top:205px;width:15px;height:15px;background:#fff;border:1px solid #ababab"></div>
<svg class="a" style="left:1346px;top:210px;" width="8" height="5" viewBox="0 0 8 5"><path d="M0 4.5H8L4 0.5Z" fill="#6a6a6a"/></svg>
<div class="a" style="left:1342px;top:221px;width:15px;height:16px;background:#fff;border:1px solid #ababab"></div>
<div class="a" style="left:1342px;top:656px;width:15px;height:15px;background:#fff;border:1px solid #ababab"></div>
<svg class="a" style="left:1346px;top:661px;" width="8" height="5" viewBox="0 0 8 5"><path d="M0 0.5H8L4 4.5Z" fill="#6a6a6a"/></svg>
<div class="a" style="left:0px;top:671px;width:1359px;height:28px;background:#e6e6e6;"></div>
<svg class="a" style="left:26px;top:679px;" width="6" height="9" viewBox="0 0 6 9"><path d="M5 0.5V8.5L0.5 4.5Z" fill="#c0c0c0"/></svg>
<svg class="a" style="left:55px;top:679px;" width="6" height="9" viewBox="0 0 6 9"><path d="M0.5 0.5V8.5L5 4.5Z" fill="#c0c0c0"/></svg>
<div class="a" style="left:100px;top:670px;width:57px;height:25px;background:#fff;border:1px solid #9b9b9b;border-top:none;border-bottom:none;"></div>
<div class="a" style="left:101px;top:670px;width:55px;height:1px;background:#fff;"></div>
<div class="a" style="left:100px;top:693px;width:57px;height:2px;background:#217346;"></div>
<div class="a" style="left:112.80px;top:676.00px;font-size:13px;line-height:16px;color:#217346;letter-spacing:-0.650px;font-weight:bold;">Lotes</div>
<svg class="a" style="left:189px;top:675px;" width="18" height="18" viewBox="0 0 18 18"><circle cx="9" cy="9" r="7.3" fill="none" stroke="#777" stroke-width="1.1"/><path d="M9 5.2V12.8M5.2 9H12.8" stroke="#666" stroke-width="1.8"/></svg>
<div class="a" style="left:682px;top:680px;width:2px;height:2px;background:#a0a0a0;"></div>
<div class="a" style="left:682px;top:684px;width:2px;height:2px;background:#a0a0a0;"></div>
<div class="a" style="left:682px;top:688px;width:2px;height:2px;background:#a0a0a0;"></div>
<div class="a" style="left:699px;top:677px;width:15px;height:15px;background:#fff;border:1px solid #ababab"></div>
<svg class="a" style="left:703px;top:680px;" width="6" height="9" viewBox="0 0 6 9"><path d="M5 0.5V8.5L0.5 4.5Z" fill="#6a6a6a"/></svg>
<div class="a" style="left:713px;top:677px;width:597px;height:15px;background:#fff;border:1px solid #ababab"></div>
<div class="a" style="left:1310px;top:677px;width:14px;height:15px;background:#dadada;"></div>
<div class="a" style="left:1324px;top:677px;width:15px;height:15px;background:#fff;border:1px solid #ababab"></div>
<svg class="a" style="left:1329px;top:680px;" width="6" height="9" viewBox="0 0 6 9"><path d="M0.5 0.5V8.5L5 4.5Z" fill="#6a6a6a"/></svg>
<div class="a" style="left:0px;top:698px;width:1359px;height:1px;background:#d4d4d4;"></div>
<div class="a" style="left:0px;top:699px;width:1359px;height:21px;background:#f3f3f3;"></div>
<div class="a" style="left:0px;top:719px;width:1359px;height:1px;background:#f8f8f8;"></div>
<div class="a" style="left:0px;top:720px;width:1359px;height:1px;background:#aab4c0;"></div>
<div class="a" style="left:0px;top:721px;width:1359px;height:3px;background:linear-gradient(90deg,#d6dcef,#d3e0f0 50%,#cbe7f2);"></div>
<svg class="a" style="left:0px;top:700px;" width="26" height="20" viewBox="0 0 26 20"><path d="M18 10A5.6 5.6 0 1 1 10.5 3.8" fill="none" stroke="#444" stroke-width="1.1" stroke-dasharray="2.2 1.3"/><path d="M13.8 2V8.2M11.8 6.2L13.8 8.4L15.8 6.2" fill="none" stroke="#444" stroke-width="1.1"/><path d="M17.8 10.2A2.6 2.6 0 1 1 22.2 12C21 13 20.3 13.4 20.3 14.6" fill="none" stroke="#333" stroke-width="1.7"/><rect x="19.2" y="15.3" width="2.2" height="1.8" fill="#333"/></svg>
<div class="a" style="left:25.00px;top:703.00px;font-size:12px;line-height:15px;color:#444;letter-spacing:-0.207px;">Acessibilidade: não disponível</div>
<div class="a" style="left:1060px;top:699px;width:40px;height:21px;background:#c6c6c6;"></div>
<svg class="a" style="left:1073px;top:702px;" width="14" height="14" viewBox="0 0 14 14"><path d="M0.5 0.5H12.5V12.5H0.5ZM4.5 0.5V12.5M8.5 0.5V12.5M0.5 4.5H12.5M0.5 8.5H12.5" fill="#d8d8d8" stroke="#666" stroke-width="1.1"/></svg>
<svg class="a" style="left:1113px;top:702px;" width="15" height="14" viewBox="0 0 15 14"><rect x="0.5" y="0.5" width="13" height="12" fill="none" stroke="#666" stroke-width="1.1"/><rect x="3.5" y="2.5" width="7" height="8" fill="none" stroke="#666" stroke-width="1.1"/><path d="M5 4.5H9M5 6.5H9M5 8.5H9" stroke="#666"/></svg>
<svg class="a" style="left:1153px;top:702px;" width="15" height="14" viewBox="0 0 15 14"><path d="M0.5 0.5H13.5V12.5H0.5Z" fill="none" stroke="#666" stroke-width="1.1"/><path d="M0.5 7.5H8.5V0.5M4.5 0.5V7.5" fill="none" stroke="#666" stroke-width="1.1"/></svg>
<div class="a" style="left:1186px;top:708px;width:8px;height:1.3px;background:#555;"></div>
<div class="a" style="left:1199px;top:709px;width:100px;height:1px;background:#a8a8a8;"></div>
<div class="a" style="left:1247px;top:704px;width:5px;height:11px;background:#6a6a6a;"></div>
<div class="a" style="left:1304px;top:708.5px;width:8px;height:1.2px;background:#555;"></div>
<div class="a" style="left:1307.4px;top:705px;width:1.2px;height:8px;background:#555;"></div>
<div class="a" style="left:1325.80px;top:702.00px;font-size:11px;line-height:14px;color:#444;letter-spacing:-0.733px;">100%</div>
</body></html>
